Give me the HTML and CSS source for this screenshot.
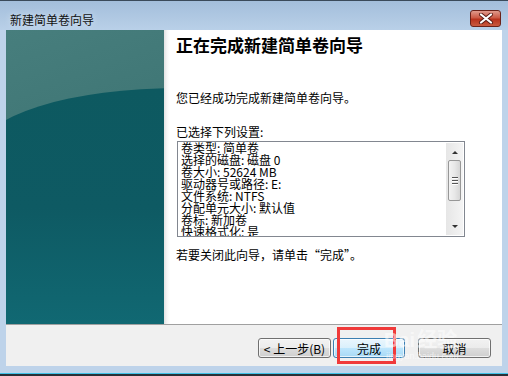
FILE: index.html
```html
<!DOCTYPE html>
<html lang="zh-CN">
<head>
  <meta charset="UTF-8" />
  <title>新建简单卷向导</title>
  <link rel="stylesheet" href="styles.css">
</head>
<body>
  <div class="window">
    <div class="titlebar">
      <span class="title">新建简单卷向导</span>
      <div class="close-btn">
        <svg width="16" height="11" viewBox="0 0 16 11">
          <path d="M3 1.5 L13 9.5 M13 1.5 L3 9.5" stroke="#5a1b14" stroke-width="4" stroke-linecap="round"/>
          <path d="M3 1.5 L13 9.5 M13 1.5 L3 9.5" stroke="#ffffff" stroke-width="2.2" stroke-linecap="round"/>
        </svg>
      </div>
    </div>

    <div class="client">
      <div class="main">
        <div class="banner"></div>
        <div class="content">
          <h1>正在完成新建简单卷向导</h1>
          <p class="intro">您已经成功完成新建简单卷向导。</p>
          <p class="label">已选择下列设置:</p>

          <!-- settings summary -->
          <div class="listbox">
            <div class="list-text">
              <div>卷类型: 简单卷</div>
              <div>选择的磁盘: 磁盘 0</div>
              <div>卷大小: 52624 MB</div>
              <div>驱动器号或路径: E:</div>
              <div>文件系统: NTFS</div>
              <div>分配单元大小: 默认值</div>
              <div>卷标: 新加卷</div>
              <div>快速格式化: 是</div>
            </div>
            <div class="scrollbar">
              <div class="arrow up"></div>
              <div class="thumb"><span></span><span></span><span></span></div>
              <div class="arrow down"></div>
            </div>
          </div>

          <p class="hint">若要关闭此向导，请单击“完成”。</p>
        </div>
      </div>

      <div class="buttons">
        <button class="btn">&lt; 上一步(B)</button>
        <button class="btn default">完成</button>
        <button class="btn cancel">取消</button>
        <div class="highlight"></div>
        <div class="watermark">Bai<span>经验</span><small>jingyan.baidu.com</small></div>
      </div>
    </div>

    <div class="frame-bottom"></div>
  </div>
</body>
</html>
```

FILE: styles.css
```css
body {
  margin: 0;
  font-family: "Noto Sans CJK SC", "Liberation Sans", sans-serif;
  font-size: 12px;
  color: #000;
}

.window {
  width: 508px;
  height: 376px;
  display: flex;
  flex-direction: column;
  background: #bed3ea;
  border-top: 1px solid #3a4a5a;
  box-sizing: border-box;
}

.titlebar {
  height: 29px;
  display: flex;
  align-items: flex-start;
  justify-content: space-between;
  background: linear-gradient(#a3bedb, #b9d0e8);
  padding: 0 7px 0 10px;
}

.title {
  line-height: 14px;
  margin-top: 12px;
  color: #111;
  text-shadow: 0 0 6px #dde9f5;
}

.close-btn {
  width: 29px;
  height: 15px;
  margin-top: 9px;
  border: 1px solid #6b2219;
  border-radius: 3px;
  background: linear-gradient(#e09a8c, #cc5a45 45%, #b8321d 55%, #c85a3f);
  display: flex;
  align-items: center;
  justify-content: center;
}

.client {
  margin: 0 6px;
  height: 336px;
  display: flex;
  flex-direction: column;
  background: #f0f0f0;
}

.main {
  height: 294px;
  display: flex;
  background: #fff;
  border-bottom: 1px solid #a0a0a0;
}

.banner {
  width: 158px;
  background: linear-gradient(160deg, #477e7d, #3b7271 60%, #356c6c);
  position: relative;
  overflow: hidden;
}

/* darker lower part with the curved edge */
.banner::before {
  content: "";
  position: absolute;
  left: -26px;
  top: 58px;
  width: 400px;
  height: 300px;
  border-radius: 200px 200px 0 0 / 63px 63px 0 0;
  background: linear-gradient(#0d5960, #0e5a63 40%, #12707b);
}

.content {
  flex: 1;
  padding: 5px 0 0 12px;
  background: linear-gradient(90deg, #e2e2e2, #f6f6f6 3px, #fff 6px);
}

h1 {
  margin: 0;
  font-size: 17px;
  line-height: 20px;
  font-weight: bold;
}

p {
  margin: 0;
  line-height: 14px;
}

.intro {
  margin-top: 36px;
}

.label {
  margin-top: 20px;
}

.listbox {
  margin: 2px 0 0 1px;
  width: 288px;
  height: 96px;
  box-sizing: border-box;
  border: 1px solid #828790;
  display: flex;
}

.list-text {
  flex: 1;
  padding-left: 3px;
  line-height: 12px;
  overflow: hidden;
  white-space: nowrap;
}

.scrollbar {
  width: 17px;
  margin: 1px 1px 1px 0;
  background: linear-gradient(90deg, #e6e6e6, #f4f4f4);
  display: flex;
  flex-direction: column;
  align-items: center;
}

.arrow {
  width: 0;
  height: 0;
  border-left: 3px solid transparent;
  border-right: 3px solid transparent;
}

.arrow.up {
  border-bottom: 3px solid #333;
  margin-top: 8px;
}

.arrow.down {
  border-top: 3px solid #333;
  margin-top: auto;
  margin-bottom: 7px;
}

.thumb {
  width: 13px;
  height: 41px;
  margin-top: 6px;
  box-sizing: border-box;
  border: 1px solid #979797;
  border-radius: 2px;
  background: linear-gradient(90deg, #f3f3f3, #e8e8e8 50%, #d6d6d6);
  display: flex;
  flex-direction: column;
  align-items: center;
  justify-content: center;
  gap: 1px;
}

.thumb span {
  width: 6px;
  height: 1px;
  background: #555;
  border-bottom: 1px solid #fff;
}

.hint {
  margin-top: 11px;
}

.buttons {
  flex: 1;
  display: flex;
  align-items: flex-start;
  padding: 13px 11px 0 0;
  justify-content: flex-end;
  position: relative;
}

.btn {
  width: 73px;
  height: 20px;
  padding: 0;
  font-family: inherit;
  font-size: 12px;
  border: 1px solid #707070;
  border-radius: 3px;
  background: linear-gradient(#f2f2f2, #ebebeb 50%, #dddddd 50%, #cfcfcf);
  box-shadow: inset 0 0 0 1px rgba(255, 255, 255, 0.7);
  margin-left: 2px;
}

.btn.default {
  width: 72px;
  border-color: #3c7fb1;
  background: linear-gradient(#eaf6fd, #d9f0fc 50%, #bee6fd 50%, #a7d9f5);
}

.btn.cancel {
  margin-left: 13px;
}

.highlight {
  position: absolute;
  left: 331px;
  top: 2px;
  width: 59px;
  height: 37px;
  box-sizing: border-box;
  border: 3px solid #f03a3a;
}

.watermark {
  position: absolute;
  left: 378px;
  top: 3px;
  font-family: "Liberation Sans", sans-serif;
  font-size: 20px;
  font-weight: bold;
  color: rgba(255, 255, 255, 0.55);
  line-height: 22px;
}

.watermark span {
  font-family: "Noto Sans CJK SC", sans-serif;
  margin-left: 2px;
}

.watermark small {
  display: block;
  font-size: 9px;
  line-height: 10px;
  font-weight: normal;
  color: rgba(255, 255, 255, 0.6);
  margin-left: 2px;
}

.frame-bottom {
  flex: 1;
  border-bottom: 2px solid #2a2f36;
  box-shadow: inset 0 -1px 0 #3fc0e6;
}
```
